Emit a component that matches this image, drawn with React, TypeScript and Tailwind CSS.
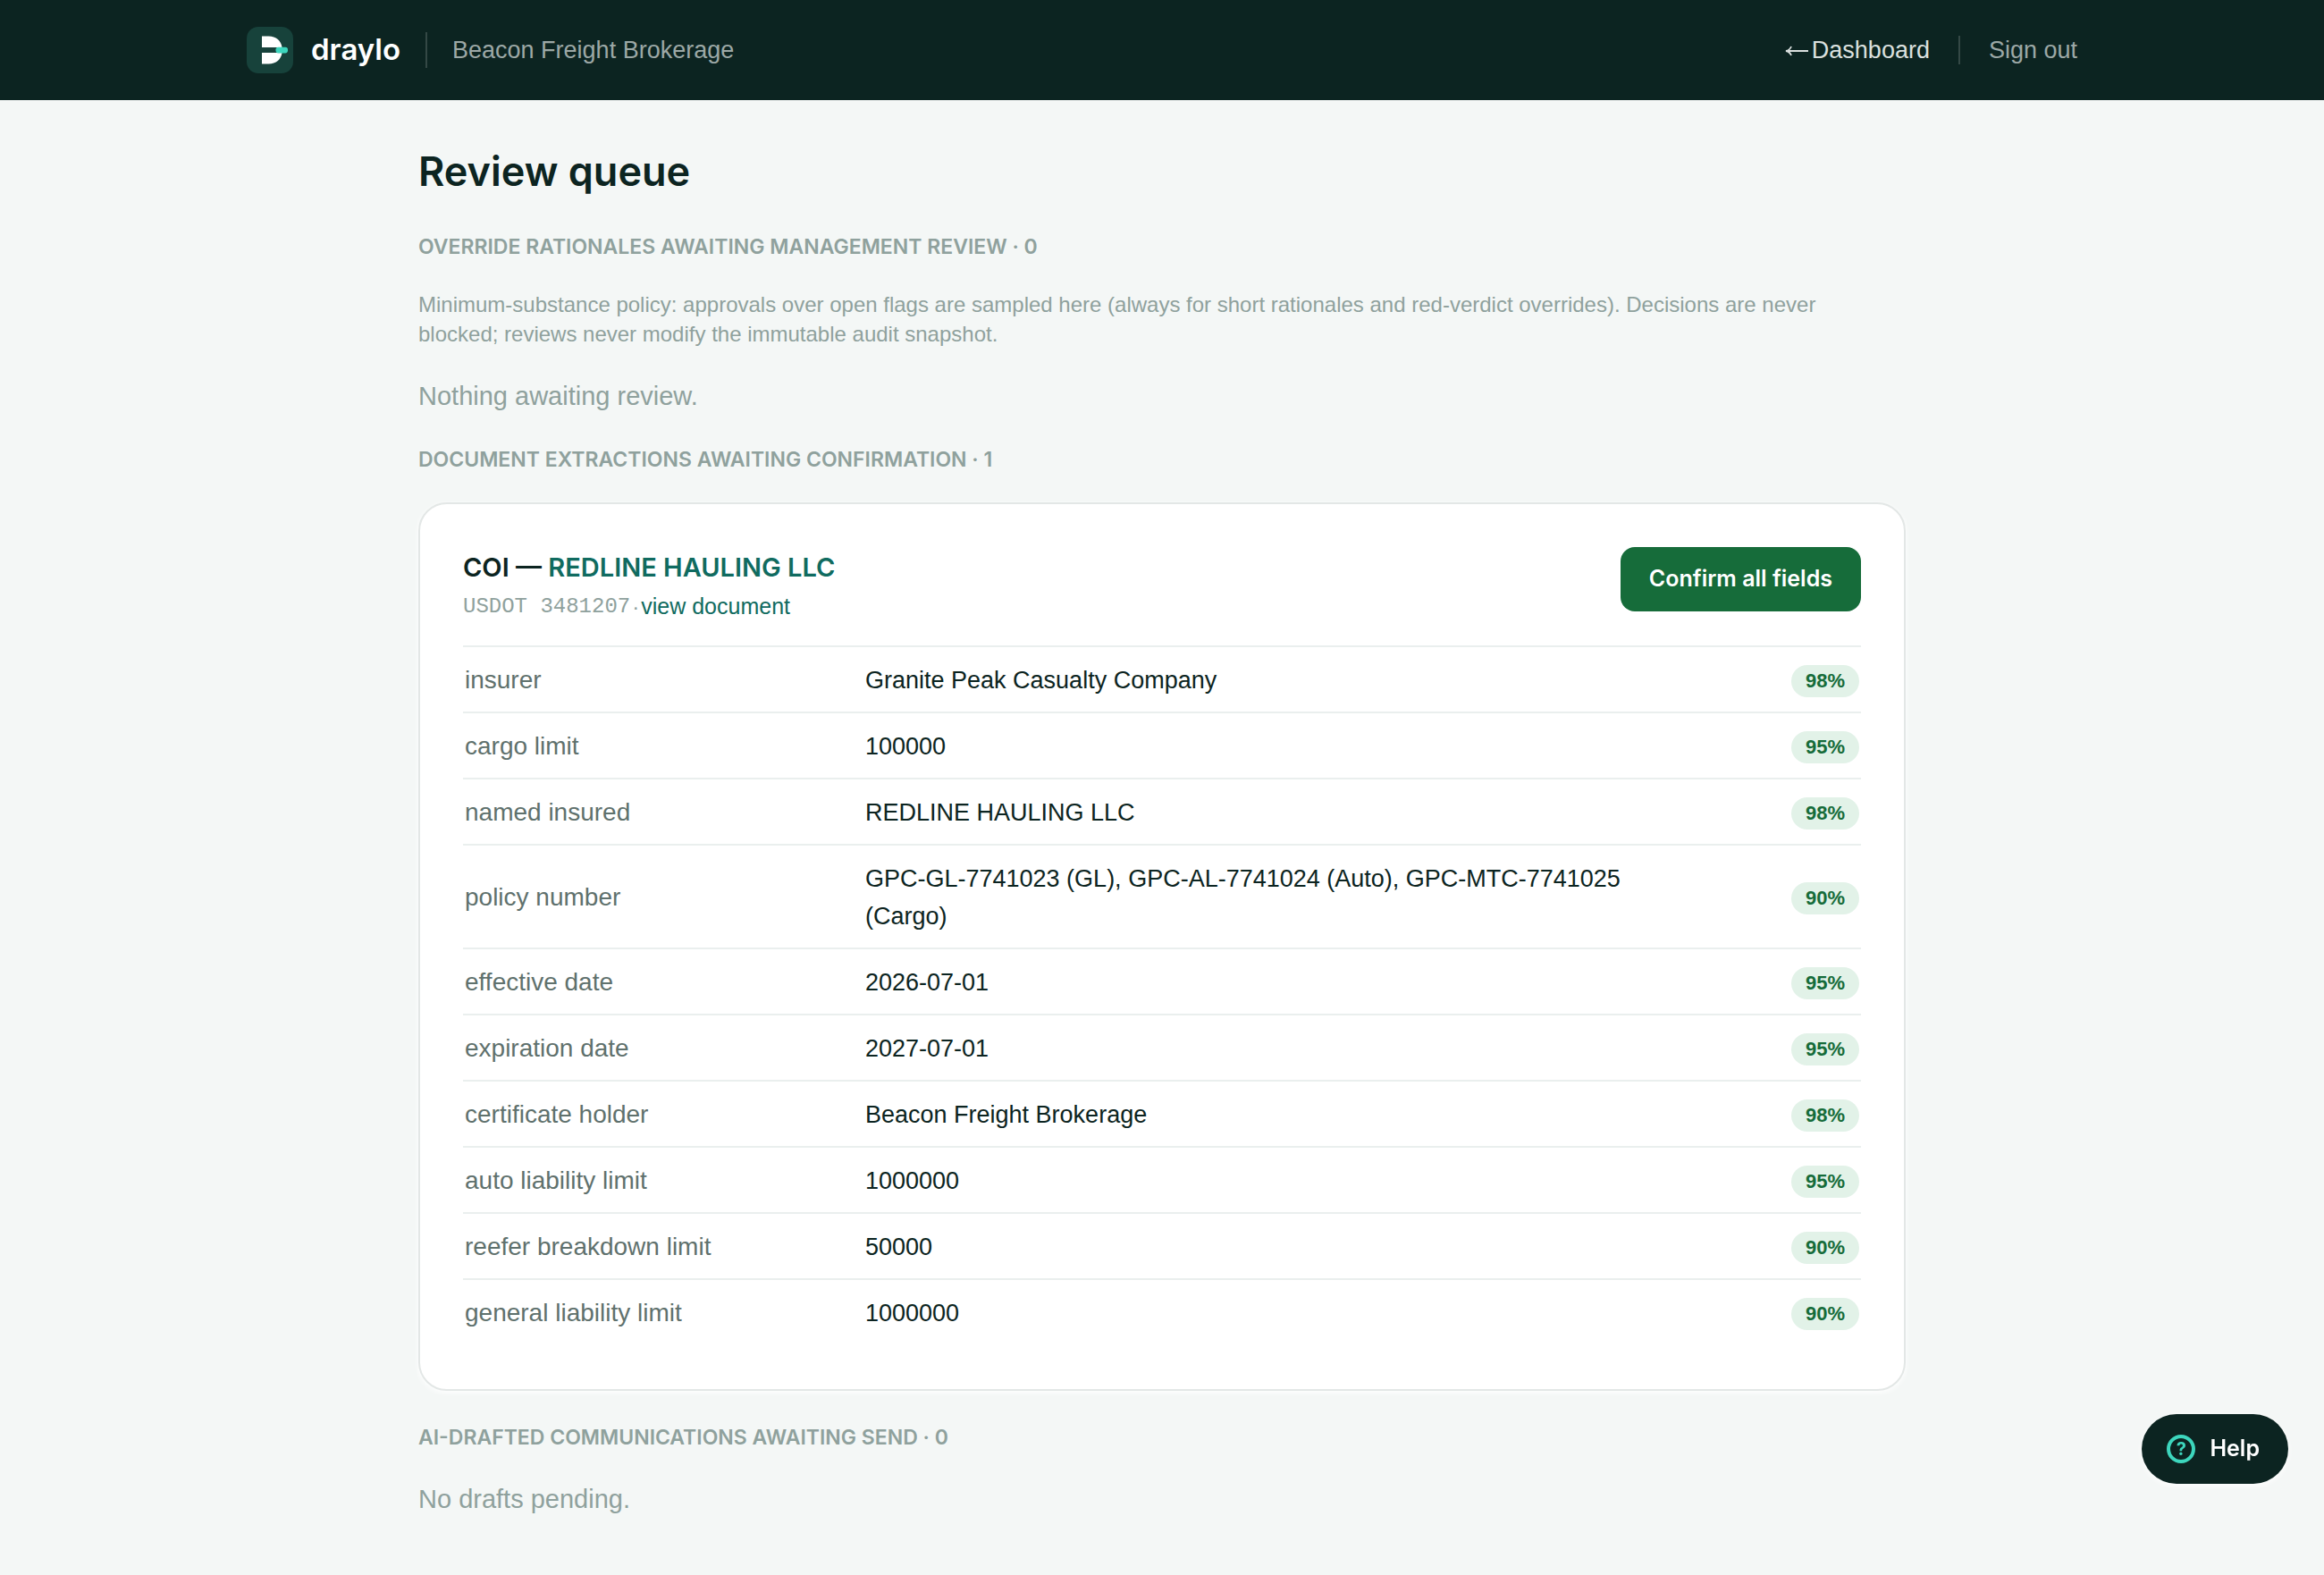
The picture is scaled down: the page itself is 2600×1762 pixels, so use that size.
import React from 'react';
import { clsx } from 'clsx';

type Field = {
    label: string;
    value: string;
    confidence: number;
};

const fields: Field[] = [
    { label: 'insurer', value: 'Granite Peak Casualty Company', confidence: 98 },
    { label: 'cargo limit', value: '100000', confidence: 95 },
    { label: 'named insured', value: 'REDLINE HAULING LLC', confidence: 98 },
    { label: 'policy number', value: 'GPC-GL-7741023 (GL), GPC-AL-7741024 (Auto), GPC-MTC-7741025 (Cargo)', confidence: 90 },
    { label: 'effective date', value: '2026-07-01', confidence: 95 },
    { label: 'expiration date', value: '2027-07-01', confidence: 95 },
    { label: 'certificate holder', value: 'Beacon Freight Brokerage', confidence: 98 },
    { label: 'auto liability limit', value: '1000000', confidence: 95 },
    { label: 'reefer breakdown limit', value: '50000', confidence: 90 },
    { label: 'general liability limit', value: '1000000', confidence: 90 },
];

function Logo() {
    return (
        <svg viewBox="0 0 52 52" className="size-13" aria-hidden="true">
            <rect width="52" height="52" rx="13" fill="#17423b" />
            <path d="M17 10.5h7.500c8.500 0 14 5 15 12.500H17z" fill="#fff" />
            <path d="M17 29h22.500c-1 7.500-6.500 12.500-15 12.500H17z" fill="#fff" />
            <rect x="32.500" y="22.800" width="13.500" height="6.600" rx="2.800" fill="#3dd6bd" />
        </svg>
    );
}

function ArrowLeft() {
    return (
        <svg viewBox="0 0 26 12" className="mt-0.5 h-3 w-[26px]" fill="none" stroke="currentColor" strokeWidth="1.800" aria-hidden="true">
            <path d="M26 6H2M7 1C6 3.500 4 5.500 1 6c3 .5 5 2.500 6 5" />
        </svg>
    );
}

function Header() {
    return (
        <header className="bg-[#0c2421]">
            <div className="mx-auto flex h-28 max-w-[2048px] items-center justify-between">
                <div className="flex items-center">
                    <Logo />
                    <span className="ml-5 font-['Inter',sans-serif] text-[33px] font-semibold text-white">draylo</span>
                    <span className="mx-7 h-10 w-0.5 bg-[#344845]" />
                    <span className="text-[27px] text-[#9ca8a6]">Beacon Freight Brokerage</span>
                </div>
                <nav className="flex items-center text-[27px]">
                    <a href="#dashboard" className="flex items-center gap-1 text-[#dbe0df]">
                        <ArrowLeft />
                        Dashboard
                    </a>
                    <span className="mx-8 h-8 w-0.5 bg-[#344845]" />
                    <button type="button" className="text-[#9ca8a6]">Sign out</button>
                </nav>
            </div>
        </header>
    );
}

function SectionTitle({ children, className }: { children: React.ReactNode; className?: string }) {
    return (
        <h2 className={clsx("font-['Inter',sans-serif] text-[23px] leading-8 font-semibold text-[#8fa19d] uppercase", className)}>
            {children}
        </h2>
    );
}

function ExtractionCard() {
    return (
        <article className="mt-8 rounded-[32px] border-2 border-[#e3e7e6] bg-white p-12 shadow-[0_2px_6px_#ffffff]">
            <div className="flex items-start justify-between">
                <div>
                    <h3 className="font-['Inter',sans-serif] text-[29px] leading-[45px] font-semibold text-[#0c2421]">
                        COI — <a href="#carrier" className="text-[#106b60]">REDLINE HAULING LLC</a>
                    </h3>
                    <p className="flex items-center text-2xl leading-[43px] text-[#8fa19d]">
                        <span className="font-['Liberation_Mono',monospace]">USDOT 3481207</span>
                        <span className="px-0.5">·</span>
                        <a href="#document" className="text-[25px] text-[#106b60]">view document</a>
                    </p>
                </div>
                <button type="button" className="h-18 rounded-2xl bg-[#166c3a] px-8 font-['Inter',sans-serif] text-[25px] font-semibold text-white">
                    Confirm all fields
                </button>
            </div>
            <table className="mt-[22px] mb-0.5 w-full table-fixed text-left text-[27px] leading-[42px]">
                <colgroup>
                    <col className="w-[450px]" />
                    <col className="w-[59%]" />
                    <col />
                </colgroup>
                <tbody>
                    {fields.map((field) => (
                        <tr key={field.label} className="border-t-2 border-[#eaefee]">
                            <th scope="row" className="px-0.5 pt-4 pb-3.5 text-[28px] font-normal text-[#5f716d]">{field.label}</th>
                            <td className="pt-4 pb-3.5 text-[#0c2421]">{field.value}</td>
                            <td className="px-0.5 pt-1">
                                <span className="ml-auto flex h-9 w-fit items-center rounded-full bg-[#e2f2e8] px-4 text-[22px] font-bold text-[#166c3a]">
                                    {field.confidence}%
                                </span>
                            </td>
                        </tr>
                    ))}
                </tbody>
            </table>
        </article>
    );
}

function HelpButton() {
    return (
        <button
            type="button"
            className="fixed right-10 bottom-[102px] flex h-[78px] items-center gap-4 rounded-full bg-[#0c2421] pr-8 pl-7 font-['Inter',sans-serif] text-[25px] font-semibold text-white shadow-[0_2px_6px_#ffffff]"
        >
            <span className="flex size-8 items-center justify-center rounded-full border-4 border-[#3dd6bd] text-xl leading-none font-bold text-[#3dd6bd]">?</span>
            Help
        </button>
    );
}

export default function App() {
    return (
        <div className="min-h-screen bg-[#f4f7f6] font-['Liberation_Sans',sans-serif] text-[#0c2421]">
            <Header />
            <main className="mx-auto max-w-[1664px] pt-12 pb-12">
                <h1 className="font-['Inter',sans-serif] text-[45px] leading-[64px] font-semibold">Review queue</h1>

                <SectionTitle className="mt-9">Override rationales awaiting management review · 0</SectionTitle>
                <p className="mt-8 max-w-[1640px] text-2xl leading-[33px] text-[#8fa19d]">
                    Minimum-substance policy: approvals over open flags are sampled here (always for short rationales and red-verdict overrides). Decisions are never blocked; reviews never modify the immutable audit snapshot.
                </p>
                <p className="mt-8 text-[29px] leading-[42px] text-[#8fa19d]">Nothing awaiting review.</p>

                <SectionTitle className="mt-[34px]">Document extractions awaiting confirmation · 1</SectionTitle>
                <ExtractionCard />

                <SectionTitle className="mt-9">AI-drafted communications awaiting send · 0</SectionTitle>
                <p className="mt-8 text-[29px] leading-[42px] text-[#8fa19d]">No drafts pending.</p>
            </main>
            <HelpButton />
        </div>
    );
}
